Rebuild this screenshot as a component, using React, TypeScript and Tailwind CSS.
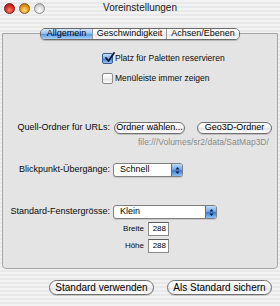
import React from 'react'

function Light({ color }: { color: 'red' | 'orange' | 'gray' }) {
  const cls =
    color === 'red'
      ? 'bg-[radial-gradient(circle_at_50%_70%,#ff8a7a_0%,#e0342a_45%,#9c1010_100%)] border-[#7a1a14]'
      : color === 'orange'
        ? 'bg-[radial-gradient(circle_at_50%_70%,#ffe080_0%,#f0a020_45%,#b06000_100%)] border-[#8a5a10]'
        : 'bg-[radial-gradient(circle_at_50%_70%,#ffffff_0%,#dcdcdc_50%,#a8a8a8_100%)] border-[#8c8c8c]'
  return <span className={`block w-[11px] h-[11px] rounded-full border ${cls}`} />
}

function Checkbox({ checked }: { checked?: boolean }) {
  return (
    <span
      className={`relative flex items-center justify-center w-[11px] h-[11px] rounded-[2px] border ${
        checked
          ? 'border-[#3a5a90] bg-[linear-gradient(180deg,#c8e0fa_0%,#6fa6ea_50%,#3d7fd6_55%,#9cc6f4_100%)]'
          : 'border-[#8a8a8a] bg-[linear-gradient(180deg,#ffffff_0%,#f0f0f0_50%,#e2e2e2_55%,#fafafa_100%)]'
      }`}
    >
      {checked && (
        <svg width="11" height="11" viewBox="0 0 11 11" className="absolute left-[1px] top-[-2px]">
          <path d="M2 6 L4.5 9 L10 1" fill="none" stroke="#0a1a30" strokeWidth="1.8" strokeLinecap="round" strokeLinejoin="round" />
        </svg>
      )}
    </span>
  )
}

function PushButton({ label, w, small }: { label: string; w: string; small?: boolean }) {
  return (
    <span
      className={`flex items-center justify-center ${w} ${
        small ? 'h-[12px] text-[9px]' : 'h-[15px] text-[10px]'
      } rounded-full border border-[#6f6f6f] bg-[linear-gradient(180deg,#ffffff_0%,#f4f4f4_45%,#e4e4e4_55%,#ffffff_100%)] shadow-[0_1px_0_rgba(0,0,0,0.15)] text-black`}
    >
      {label}
    </span>
  )
}

function Popup({ label, w }: { label: string; w: string }) {
  return (
    <span className={`flex items-stretch ${w} h-[14px] rounded-[3px] border border-[#7f7f7f] bg-white overflow-hidden shadow-[0_1px_0_rgba(0,0,0,0.12)]`}>
      <span className="flex-1 flex items-center pl-[6px] text-[9px] text-black">{label}</span>
      <span className="w-[11px] flex items-center justify-center border-l border-[#5070a0] bg-[linear-gradient(180deg,#bcdcfa_0%,#6aa2e8_50%,#3a7ad2_55%,#8cc0f2_100%)]">
        <svg width="5" height="9" viewBox="0 0 5 9">
          <path d="M0.5 3.5 L2.5 1 L4.5 3.5 Z M0.5 5.5 L2.5 8 L4.5 5.5 Z" fill="#0c1c34" />
        </svg>
      </span>
    </span>
  )
}

function Field({ value }: { value: string }) {
  return (
    <span className="flex items-center justify-end w-[21px] h-[14px] pr-[2px] border border-[#8a8a8a] border-t-[#5a5a5a] bg-white text-[8px] text-black">
      {value}
    </span>
  )
}

export default function App() {
  return (
    <div className="w-[280px] h-[306px] flex flex-col overflow-hidden font-['Liberation_Sans',Arial,sans-serif] text-[#0a0a0a] bg-[repeating-linear-gradient(180deg,#f2f2f2_0px,#f2f2f2_2px,#e9e9e9_2px,#e9e9e9_4px)]">
      {/* Title bar */}
      <div className="grid grid-cols-[1fr_auto_1fr] h-[22px]">
        <div className="flex gap-[4px] pl-[4px] pt-[3px]">
          <Light color="red" />
          <Light color="orange" />
          <Light color="gray" />
        </div>
        <div className="pt-[2px] text-[10px] leading-[12px] text-[#1a1a1a]">Voreinstellungen</div>
        <div />
      </div>

      {/* Tabs */}
      <div className="relative z-10 flex justify-center mt-[6px]">
        <div className="flex h-[12px] rounded-[5px] border border-[#6a6a6a] overflow-hidden shadow-[0_1px_1px_rgba(0,0,0,0.2)] text-[9px]">
          <span className="flex items-center justify-center w-[51px] bg-[linear-gradient(180deg,#d4e8fc_0%,#8cbcf2_50%,#5a9ae8_55%,#a8d2f8_100%)] text-black">
            Allgemein
          </span>
          <span className="flex items-center justify-center w-[74px] border-l border-[#9a9a9a] bg-[linear-gradient(180deg,#ffffff_0%,#f6f6f6_50%,#e8e8e8_55%,#fbfbfb_100%)]">
            Geschwindigkeit
          </span>
          <span className="flex items-center justify-center w-[73px] border-l border-[#9a9a9a] bg-[linear-gradient(180deg,#ffffff_0%,#f6f6f6_50%,#e8e8e8_55%,#fbfbfb_100%)]">
            Achsen/Ebenen
          </span>
        </div>
      </div>

      {/* Panel */}
      <div className="mx-[2px] -mt-[7px] h-[236px] rounded-b-[4px] border border-[#a6a6a6] bg-[#e4e4e4] text-[9px]">
        <div className="flex flex-col gap-[9px] pl-[99px] pt-[19px] text-[8.5px]">
          <div className="flex items-center gap-[2px] h-[11px]">
            <Checkbox checked />
            <span>Platz für Paletten reservieren</span>
          </div>
          <div className="flex items-center gap-[2px] h-[11px]">
            <Checkbox />
            <span>Menüleiste immer zeigen</span>
          </div>
        </div>

        <div className="flex items-center gap-[4px] h-[13px] mt-[37px]">
          <span className="w-[107px] text-right">Quell-Ordner für URLs:</span>
          <PushButton label="Ordner wählen..." w="w-[71px]" small />
          <span className="w-[4px]" />
          <PushButton label="Geo3D-Ordner" w="w-[75px]" small />
        </div>
        <div className="h-[9px] mt-[4px] pl-[135px] text-[8.5px] leading-[9px] text-[#8a8a8a]">
          file:///Volumes/sr2/data/SatMap3D/
        </div>

        <div className="flex items-center gap-[3px] h-[14px] mt-[16px]">
          <span className="w-[107px] text-right">Blickpunkt-Übergänge:</span>
          <Popup label="Schnell" w="w-[70px]" />
        </div>

        <div className="flex items-center gap-[3px] h-[14px] mt-[28px]">
          <span className="w-[107px] text-right">Standard-Fenstergrösse:</span>
          <Popup label="Klein" w="w-[104px]" />
        </div>

        <div className="flex items-center gap-[4px] h-[14px] mt-[3px]">
          <span className="w-[141px] text-right text-[8px]">Breite</span>
          <Field value="288" />
        </div>
        <div className="flex items-center gap-[4px] h-[14px] mt-[3px]">
          <span className="w-[141px] text-right text-[8px]">Höhe</span>
          <Field value="288" />
        </div>
      </div>

      {/* Bottom buttons */}
      <div className="flex justify-end gap-[13px] pr-[8px] mt-[11px]">
        <PushButton label="Standard verwenden" w="w-[105px]" />
        <PushButton label="Als Standard sichern" w="w-[105px]" />
      </div>
    </div>
  )
}
